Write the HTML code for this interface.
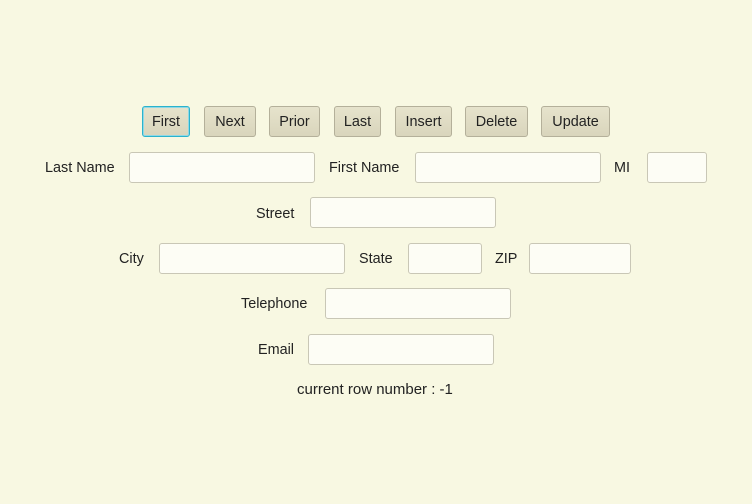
<!DOCTYPE html>
<html><head><style>
body{margin:0;width:752px;height:504px;background:#f8f8e2;font-family:"Liberation Sans",sans-serif;font-size:14.4px;color:#222;position:relative;overflow:hidden}
.b{position:absolute;top:106px;height:29px;border:1px solid #b4b09a;border-radius:3px;background:linear-gradient(#e6e3cc,#d9d5bc);text-align:center;line-height:31px;box-sizing:content-box}
.f{border:1px solid #2bb3cc;box-shadow:0 0 0 1px #8fd8e6 inset}
.i{position:absolute;height:31px;border:1px solid #c9c7b6;border-radius:3px;background:#fdfdf5;box-sizing:border-box}
.l{position:absolute;line-height:18px}
</style></head><body>
<div class="b f" style="left:142px;width:46px">First</div>
<div class="b" style="left:204px;width:50px">Next</div>
<div class="b" style="left:269px;width:49px">Prior</div>
<div class="b" style="left:334px;width:45px">Last</div>
<div class="b" style="left:395px;width:55px">Insert</div>
<div class="b" style="left:465px;width:61px">Delete</div>
<div class="b" style="left:541px;width:67px">Update</div>

<div class="l" style="left:45px;top:159px">Last Name</div>
<div class="i" style="left:129px;top:152px;width:186px"></div>
<div class="l" style="left:329px;top:159px">First Name</div>
<div class="i" style="left:415px;top:152px;width:186px"></div>
<div class="l" style="left:614px;top:159px">MI</div>
<div class="i" style="left:647px;top:152px;width:60px"></div>

<div class="l" style="left:256px;top:205px">Street</div>
<div class="i" style="left:310px;top:197px;width:186px"></div>

<div class="l" style="left:119px;top:250px">City</div>
<div class="i" style="left:159px;top:243px;width:186px"></div>
<div class="l" style="left:359px;top:250px">State</div>
<div class="i" style="left:408px;top:243px;width:74px"></div>
<div class="l" style="left:495px;top:250px">ZIP</div>
<div class="i" style="left:529px;top:243px;width:102px"></div>

<div class="l" style="left:241px;top:295px">Telephone</div>
<div class="i" style="left:325px;top:288px;width:186px"></div>

<div class="l" style="left:258px;top:341px">Email</div>
<div class="i" style="left:308px;top:334px;width:186px"></div>

<div class="l" style="left:297px;top:381px;font-size:15px">current row number : -1</div>
</body></html>
